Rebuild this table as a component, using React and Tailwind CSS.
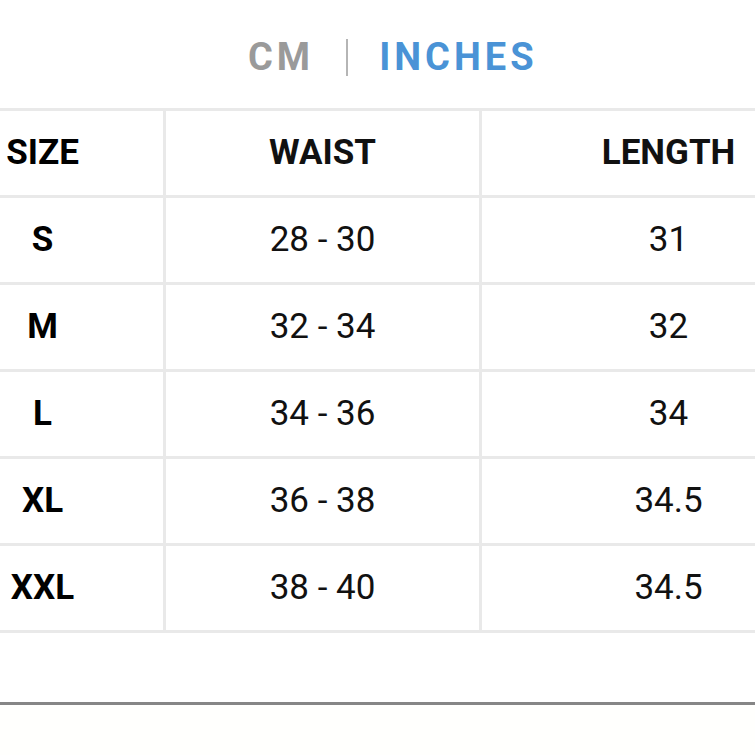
const rows = [
  ["S", "28 - 30", "31"],
  ["M", "32 - 34", "32"],
  ["L", "34 - 36", "34"],
  ["XL", "36 - 38", "34.5"],
  ["XXL", "38 - 40", "34.5"],
];

function Row({ cells, head }) {
  const weight = head ? "font-bold" : "font-normal";
  return (
    <div className="flex h-[87px] border-b-[3px] border-[#e9e9e9]">
      <div className="w-[166px] shrink-0 border-r-[3px] border-[#e9e9e9] pr-[78px] flex items-center justify-center text-[35px] font-bold text-black">
        {cells[0]}
      </div>
      <div
        className={`w-[316px] shrink-0 border-r-[3px] border-[#e9e9e9] flex items-center justify-center text-[35px] text-[#111] ${weight}`}
      >
        {cells[1]}
      </div>
      <div
        className={`w-[373px] shrink-0 flex items-center justify-center text-[35px] text-[#111] ${weight}`}
      >
        {cells[2]}
      </div>
    </div>
  );
}

export default function App() {
  return (
    <div className="w-[755px] h-[755px] overflow-hidden bg-white font-['Roboto',sans-serif] flex flex-col">
      <div className="h-[108px] shrink-0 flex items-center pl-[248px] pt-[6px]">
        <span className="text-[38px] font-bold tracking-[4px] text-[#9a9a9a]">CM</span>
        <span className="ml-[32px] w-[2px] h-[37px] bg-[#b5b5b5]" />
        <span className="ml-[31px] text-[38px] font-bold tracking-[4px] text-[#4a93d6]">INCHES</span>
      </div>
      <div className="border-t-[3px] border-[#e9e9e9] w-[855px]">
        <Row head cells={["SIZE", "WAIST", "LENGTH"]} />
        {rows.map((r) => (
          <Row key={r[0]} cells={r} />
        ))}
      </div>
      <div className="h-[69px] shrink-0 bg-white" />
      <div className="h-[3px] shrink-0 bg-[#868686]" />
      <div className="flex-1 bg-[#fffffd]" />
    </div>
  );
}
